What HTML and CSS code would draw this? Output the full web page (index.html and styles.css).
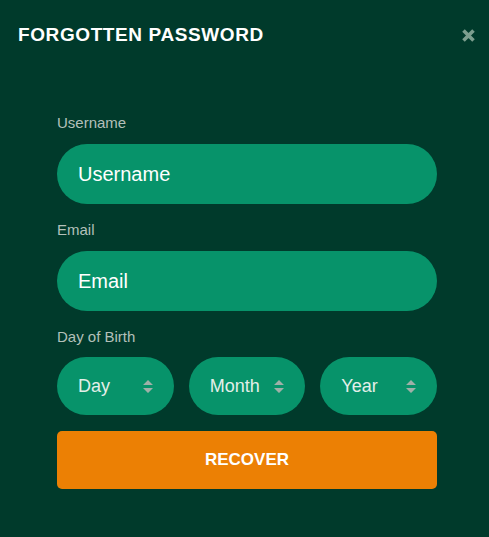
FILE: index.html
```html
<!DOCTYPE html>
<html lang="en">
<head>
  <meta charset="UTF-8" />
  <title>Forgotten Password</title>
  <link rel="stylesheet" href="styles.css">
</head>
<body>

  <div class="modal">
    <div class="modal-header">
      <h1 class="modal-title">FORGOTTEN PASSWORD</h1>
      <button class="close-btn" aria-label="Close">
        <svg width="15" height="15" viewBox="0 0 15 15">
          <path d="M2.5 2.5 L12.5 12.5 M12.5 2.5 L2.5 12.5" stroke="#7c9e8e" stroke-width="3.6" stroke-linecap="butt"/>
        </svg>
      </button>
    </div>

    <!-- RECOVER FORM -->
    <form class="recover-form">
      <div class="field">
        <label class="field-label" for="username">Username</label>
        <input class="field-input" id="username" type="text" placeholder="Username">
      </div>

      <div class="field">
        <label class="field-label" for="email">Email</label>
        <input class="field-input" id="email" type="email" placeholder="Email">
      </div>

      <div class="field field-birth">
        <label class="field-label">Day of Birth</label>
        <div class="birth-row">
          <div class="select-wrap">
            <select class="field-select"><option>Day</option></select>
            <svg class="select-arrow" width="10" height="13" viewBox="0 0 10 13"><path d="M5 0 L10 5 L0 5 Z M0 8 L10 8 L5 13 Z" fill="#9fb0a8"/></svg>
          </div>
          <div class="select-wrap">
            <select class="field-select"><option>Month</option></select>
            <svg class="select-arrow" width="10" height="13" viewBox="0 0 10 13"><path d="M5 0 L10 5 L0 5 Z M0 8 L10 8 L5 13 Z" fill="#9fb0a8"/></svg>
          </div>
          <div class="select-wrap">
            <select class="field-select"><option>Year</option></select>
            <svg class="select-arrow" width="10" height="13" viewBox="0 0 10 13"><path d="M5 0 L10 5 L0 5 Z M0 8 L10 8 L5 13 Z" fill="#9fb0a8"/></svg>
          </div>
        </div>
      </div>

      <button type="button" class="recover-btn">RECOVER</button>
    </form>
  </div>

</body>
</html>
```

FILE: styles.css
```css
body {
  margin: 0;
  background-color: #003a2b;
  font-family: "Liberation Sans", Arial, sans-serif;
}
.modal {
  padding: 24px 13px 40px 18px;
}
.modal-header {
  display: flex;
  align-items: center;
  justify-content: space-between;
  height: 22px;
}
.modal-title {
  margin: 0;
  font-size: 19px;
  line-height: 22px;
  letter-spacing: 0.6px;
  font-weight: bold;
  color: #fff;
}
.close-btn {
  background: none;
  border: none;
  padding: 0;
  width: 15px;
  height: 15px;
  display: flex;
  cursor: pointer;
}
.recover-form {
  width: 380px;
  margin: 69px 0 0 39px;
}
.field {
  display: flex;
  flex-direction: column;
  margin-bottom: 18px;
}
.field-birth {
  margin-bottom: 16px;
}
.field-label {
  font-size: 15px;
  line-height: 16px;
  color: #b3c0ba;
  margin-bottom: 13px;
}
.field-birth .field-label {
  margin-bottom: 12px;
}
.field-input {
  height: 60px;
  box-sizing: border-box;
  border: none;
  border-radius: 30px;
  background-color: #07936a;
  color: #fff;
  font-family: inherit;
  font-size: 20px;
  padding: 0 21px;
  outline: none;
}
.field-input::placeholder {
  color: #fff;
  opacity: 1;
}
.birth-row {
  display: grid;
  grid-template-columns: repeat(3, 1fr);
  gap: 15px;
}
.select-wrap {
  position: relative;
}
.field-select {
  appearance: none;
  -webkit-appearance: none;
  width: 100%;
  height: 58px;
  border: none;
  border-radius: 29px;
  background-color: #07936a;
  color: #e3efe9;
  font-family: inherit;
  font-size: 18px;
  padding: 0 21px;
  outline: none;
}
.select-arrow {
  position: absolute;
  right: 21px;
  top: 23px;
  pointer-events: none;
}
.recover-btn {
  display: block;
  width: 100%;
  height: 58px;
  border: none;
  border-radius: 5px;
  background-color: #ec8004;
  color: #fff;
  font-family: inherit;
  font-size: 17px;
  font-weight: bold;
  cursor: pointer;
}
```
